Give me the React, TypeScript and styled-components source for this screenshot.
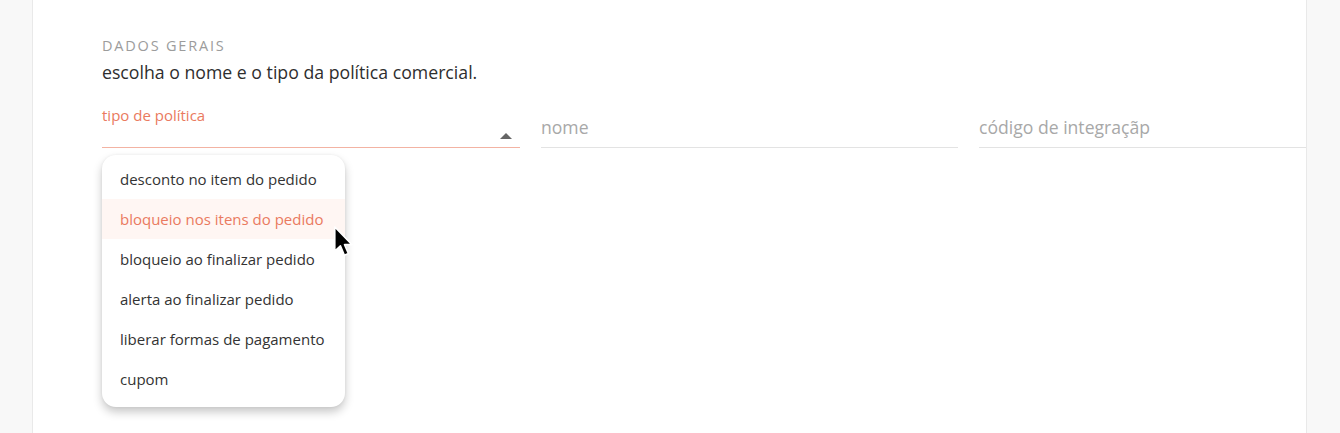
import React from 'react'
import styled, { createGlobalStyle } from 'styled-components'

const GlobalStyle = createGlobalStyle`
  html, body {
    margin: 0;
    padding: 0;
    background: #f8f8f8;
    font-family: 'Open Sans', 'Noto Sans', sans-serif;
  }
`

const Page = styled.div`
  height: 433px;
  overflow: hidden;
`

const Card = styled.section`
  position: relative;
  margin-left: 32px;
  width: 1275px;
  height: 433px;
  box-sizing: border-box;
  background: #ffffff;
  border-left: 1px solid #e9e9e9;
  border-right: 1px solid #e9e9e9;
  padding: 37px 0 0 69px;
  overflow: hidden;
`

const SectionTitle = styled.h2`
  margin: 0;
  font-size: 14.5px;
  line-height: 18px;
  font-weight: 400;
  letter-spacing: 1.8px;
  color: #9c9c9c;
  text-transform: uppercase;
`

const SectionText = styled.p`
  margin: 5px 0 0;
  font-size: 17.7px;
  line-height: 24px;
  color: #2e2e2e;
`

const FieldsRow = styled.div`
  display: grid;
  grid-template-columns: 418px 417px 1fr;
  column-gap: 21px;
  align-items: end;
  margin-top: 16px;
`

const Field = styled.div<{ $active?: boolean }>`
  position: relative;
  display: flex;
  flex-direction: column;
  justify-content: flex-end;
  height: 47px;
  border-bottom: 1px solid ${(p) => (p.$active ? '#f3b3a3' : '#e3e3e3')};
`

const FloatLabel = styled.label`
  font-size: 15px;
  line-height: 20px;
  color: #ea7a60;
`

const SelectRow = styled.div`
  display: flex;
  justify-content: flex-end;
  align-items: center;
  height: 22px;
  padding-right: 8px;
`

const Arrow = styled.span`
  width: 0;
  height: 0;
  border-left: 6px solid transparent;
  border-right: 6px solid transparent;
  border-bottom: 6px solid #666666;
`

const Placeholder = styled.span`
  font-size: 17.6px;
  line-height: 24px;
  padding-bottom: 8px;
  color: #a8a8a8;
`

const Menu = styled.ul`
  position: absolute;
  top: 55px;
  left: 0;
  width: 243px;
  margin: 0;
  padding: 4px 0 8px;
  list-style: none;
  background: #ffffff;
  border-radius: 14px;
  box-shadow: 0 5px 10px rgba(0, 0, 0, 0.22), 0 0 3px rgba(0, 0, 0, 0.06);
  z-index: 2;
`

const MenuItem = styled.li<{ $hover?: boolean }>`
  display: flex;
  align-items: center;
  height: 40px;
  padding-left: 18px;
  font-size: 15px;
  color: ${(p) => (p.$hover ? '#ea7a60' : '#333333')};
  background: ${(p) => (p.$hover ? '#fff6f3' : 'transparent')};
`

const Cursor = styled.svg`
  position: absolute;
  top: 125px;
  left: 231px;
  z-index: 3;
`

const options = [
  'desconto no item do pedido',
  'bloqueio nos itens do pedido',
  'bloqueio ao finalizar pedido',
  'alerta ao finalizar pedido',
  'liberar formas de pagamento',
  'cupom',
]

const App = () => {
  return (
    <Page>
      <GlobalStyle />
      <Card>
        <SectionTitle>Dados gerais</SectionTitle>
        <SectionText>escolha o nome e o tipo da política comercial.</SectionText>
        <FieldsRow>
          <Field $active>
            <FloatLabel>tipo de política</FloatLabel>
            <SelectRow>
              <Arrow />
            </SelectRow>
            <Menu>
              {options.map((option, i) => (
                <MenuItem key={option} $hover={i === 1}>
                  {option}
                </MenuItem>
              ))}
            </Menu>
            <Cursor width='24' height='34' viewBox='0 0 20 28'>
              <path
                d='M1.5 1.5 L1.5 21.5 L6.2 17.2 L9.5 25 L12.8 23.6 L9.6 16.2 L15.8 16.2 Z'
                fill='#000000'
                stroke='#ffffff'
                strokeWidth='1.3'
                strokeLinejoin='round'
              />
            </Cursor>
          </Field>
          <Field>
            <Placeholder>nome</Placeholder>
          </Field>
          <Field>
            <Placeholder>código de integraçãp</Placeholder>
          </Field>
        </FieldsRow>
      </Card>
    </Page>
  )
}

export default App
